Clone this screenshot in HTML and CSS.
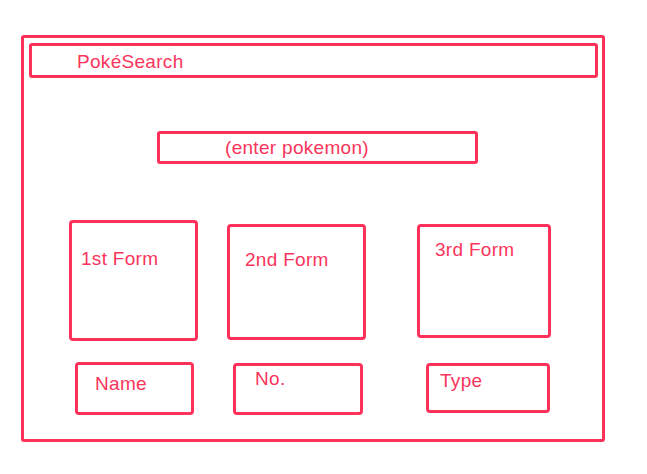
FILE: index.html
```html
<!DOCTYPE html>
<html lang="en">
<head>
<meta charset="utf-8">
<title>PokéSearch wireframe</title>
<link rel="stylesheet" href="styles.css">
</head>
<body>
<div class="frame">
  <header class="topbar">PokéSearch</header>
  <div class="search">(enter pokemon)</div>
  <div class="row forms">
    <div class="box form form-1">1st Form</div>
    <div class="box form form-2">2nd Form</div>
    <div class="box form form-3">3rd Form</div>
  </div>
  <div class="row info">
    <div class="box field field-name">Name</div>
    <div class="box field field-no">No.</div>
    <div class="box field field-type">Type</div>
  </div>
</div>
</body>
</html>
```
FILE: styles.css
```css
* { box-sizing: border-box; }

body {
  margin: 0;
  background: #ffffff;
  font-family: "Liberation Sans", Arial, sans-serif;
  font-size: 19px;
  letter-spacing: 0.3px;
  color: #f8355c;
}

.frame {
  margin: 35px 0 0 21px;
  width: 584px;
  height: 407px;
  border: 3px solid #fd3159;
  border-radius: 3px;
  display: flex;
  flex-direction: column;
  align-items: flex-start;
}

.topbar {
  margin: 5px 0 0 5px;
  width: 569px;
  height: 35px;
  border: 3px solid #fd3159;
  border-radius: 3px;
  padding: 3px 0 0 45px;
  display: flex;
  align-items: center;
}

.search {
  margin: 53px 0 0 133px;
  width: 321px;
  height: 33px;
  border: 3px solid #fd3159;
  border-radius: 3px;
  padding-left: 65px;
  display: flex;
  align-items: center;
}

.row {
  display: flex;
  align-items: flex-start;
}

.forms { margin-top: 56px; }
.info { margin-top: 21px; }

.box {
  border: 3px solid #fd3159;
  border-radius: 4px;
}

.form-1 { margin-left: 45px; width: 129px; height: 121px; padding: 25px 0 0 9px; }
.form-2 { margin: 4px 0 0 29px; width: 139px; height: 116px; padding: 22px 0 0 15px; }
.form-3 { margin: 4px 0 0 51px; width: 134px; height: 114px; padding: 12px 0 0 15px; }

.field-name { margin-left: 51px; width: 119px; height: 53px; padding: 8px 0 0 17px; }
.field-no { margin: 1px 0 0 39px; width: 130px; height: 52px; padding: 2px 0 0 19px; }
.field-type { margin: 1px 0 0 63px; width: 124px; height: 50px; padding: 4px 0 0 11px; }
```
